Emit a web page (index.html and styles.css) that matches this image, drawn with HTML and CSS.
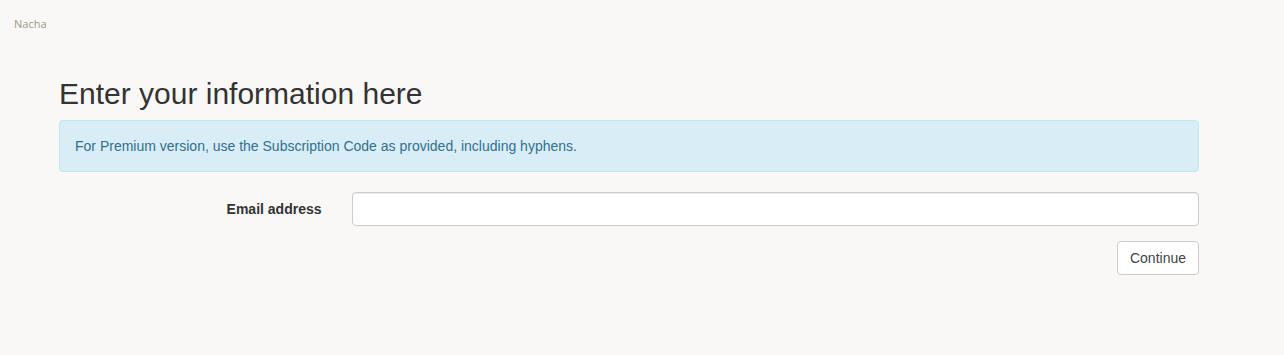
FILE: index.html
```html
<!DOCTYPE html>
<html lang="en">
<head>
    <meta charset="UTF-8">
    <meta name="viewport" content="width=device-width, initial-scale=1.0">
    <title>Enter your information</title>
    <link rel="stylesheet" href="styles.css">
</head>
<body>
    <div class="brand">Nacha</div>
    <div class="container">
        <h2>Enter your information here</h2>
        <div class="alert">For Premium version, use the Subscription Code as provided, including hyphens.</div>
        <form class="form-horizontal">
            <div class="form-group">
                <label for="email" class="control-label">Email address</label>
                <div class="field">
                    <input type="email" id="email" class="form-control">
                </div>
            </div>
            <div class="actions">
                <button type="button" class="btn">Continue</button>
            </div>
        </form>
    </div>
</body>
</html>
```

FILE: styles.css
```css
* {
    box-sizing: border-box;
}

body {
    font-family: "Liberation Sans", Arial, sans-serif;
    font-size: 14px;
    line-height: 1.42857;
    color: #333;
    background-color: #f9f8f6;
    margin: 0;
    padding: 0;
}

.brand {
    padding: 16px 14px 0;
    height: 31px;
    font-family: "Open Sans", sans-serif;
    font-size: 11px;
    line-height: 15px;
    color: #9c9a88;
}

.container {
    width: 1170px;
    padding: 0 15px;
    margin-left: 44px;
}

h2 {
    font-size: 30px;
    font-weight: 500;
    line-height: 1.1;
    margin: 46px 0 10px;
}

.alert {
    padding: 16px 15px 14px;
    margin-bottom: 20px;
    border: 1px solid #bce8f1;
    border-radius: 4px;
    background-color: #d9edf7;
    color: #31708f;
}

.form-group {
    display: flex;
    margin: 0 -15px 15px;
}

.control-label {
    width: 25%;
    padding: 8px 15px 0;
    text-align: right;
    font-weight: bold;
}

.field {
    width: 75%;
    padding: 0 15px;
}

.form-control {
    display: block;
    width: 100%;
    height: 34px;
    padding: 6px 12px;
    font-size: 14px;
    font-family: inherit;
    background-color: #fff;
    border: 1px solid #ccc;
    border-radius: 4px;
    box-shadow: inset 0 1px 1px rgba(0, 0, 0, 0.075);
}

.actions {
    display: flex;
    justify-content: flex-end;
}

.btn {
    height: 34px;
    padding: 6px 12px;
    font-size: 14px;
    font-family: inherit;
    color: #444;
    background-color: #fff;
    border: 1px solid #ccc;
    border-radius: 4px;
    cursor: pointer;
}

.btn:hover {
    background-color: #e6e6e6;
}
```
